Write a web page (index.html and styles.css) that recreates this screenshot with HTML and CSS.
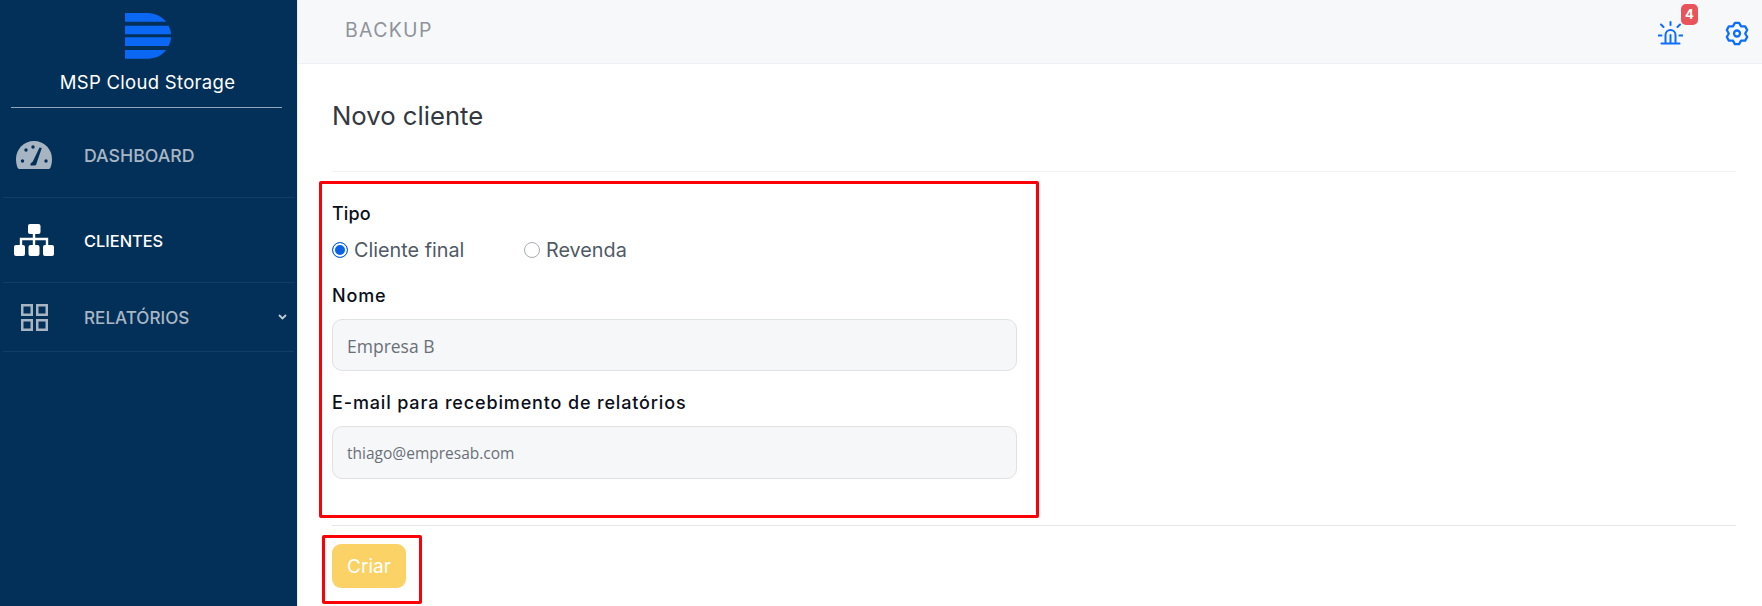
FILE: index.html
```html
<!DOCTYPE html>
<html lang="pt">
<head>
<meta charset="utf-8">
<title>Novo cliente</title>
<link rel="stylesheet" href="styles.css">
</head>
<body>
<div class="app">
  <aside class="sidebar">
    <div class="brand">
      <svg class="logo" width="46" height="46" viewBox="0 0 46 46"><path fill="#0a68f5" d="M0 0H23C30 0 37 3.500 41 8.700H0ZM0 12.700H43.500C45 15.500 46 18.500 46 21.300H0ZM0 24.300H46C46 27.500 45 30.500 43.500 33H0ZM0 37H41C37 42.500 30 45.700 23 45.700H0Z"/></svg>
      <div class="brand-name">MSP Cloud Storage</div>
    </div>
    <nav class="menu">
      <a class="menu-item item-dash">
        <span class="menu-icon">
          <svg width="36" height="28" viewBox="0 0 36 28"><path fill="#a7b4c2" d="M18 0C8 0 0 8 0 18C0 21 .5 24 1.500 26.500C2 27.500 3 28 4 28H32C33 28 34 27.500 34.500 26.500C35.500 24 36 21 36 18C36 8 28 0 18 0Z"/><g fill="#033058"><circle cx="17" cy="6" r="1.700"/><circle cx="10" cy="9" r="1.700"/><circle cx="6.500" cy="20" r="1.700"/><circle cx="30" cy="20" r="1.700"/><path d="M23.500 6.500L25.800 7L20.500 22.500C20.500 24 19.500 24.500 18 24.500H14.500C14 23 15 21.500 16.700 20.700Z"/></g></svg>
        </span>
        <span class="menu-label">DASHBOARD</span>
      </a>
      <a class="menu-item item-clients active">
        <span class="menu-icon">
          <svg width="40" height="32" viewBox="0 0 40 32" fill="#fff"><rect x="14" y="0" width="12.500" height="10" rx="2"/><path d="M18.800 10H21.200V13.800H34.200V21H31.800V16.200H21.200V21H18.800V16.200H8.200V21H5.800V13.800H18.800Z"/><rect x="0" y="21" width="11" height="11" rx="2"/><rect x="14.500" y="21" width="11" height="11" rx="2"/><rect x="29" y="21" width="11" height="11" rx="2"/></svg>
        </span>
        <span class="menu-label">CLIENTES</span>
      </a>
      <a class="menu-item item-reports">
        <span class="menu-icon">
          <svg width="27" height="27" viewBox="0 0 27 27" fill="none" stroke="#a7b4c2" stroke-width="2.500"><rect x="1.250" y="1.250" width="9.500" height="9.500"/><rect x="16.250" y="1.250" width="9.500" height="9.500"/><rect x="1.250" y="16.250" width="9.500" height="9.500"/><rect x="16.250" y="16.250" width="9.500" height="9.500"/></svg>
        </span>
        <span class="menu-label">RELATÓRIOS</span>
        <svg class="chev" width="9" height="6" viewBox="0 0 9 6" fill="none" stroke="#c3ccd6" stroke-width="1.800"><path d="M1 1L4.500 4.500L8 1"/></svg>
      </a>
    </nav>
  </aside>
  <main class="main">
    <header class="topbar">
      <span class="page-kicker">BACKUP</span>
      <div class="top-icons">
        <span class="alarm">
          <svg width="25" height="24" viewBox="0 0 25 24" fill="none" stroke="#0d6efd" stroke-width="2" stroke-linecap="round"><path d="M7.500 21V14A5 5 0 0 1 17.500 14V21M12.500 14V21M3.500 22.500H21.500M12.500 1V4M3 3.500L5.500 6M22 3.500L19.500 6M.5 14.500H3.500M21.500 14.500H24.500"/></svg>
          <span class="badge">4</span>
        </span>
        <svg width="24" height="25" viewBox="0 0 24 25" fill="none" stroke="#0d6efd" stroke-width="2.300" stroke-linejoin="round"><path d="M9.940 1.900H14.060L16.100 5.400H20.150L22.200 9L20.200 12.500L22.200 16L20.150 19.590H16.100L14.060 23.100H9.940L7.900 19.600H3.850L1.800 16L3.800 12.500L1.800 9L3.850 5.410H7.900Z"/><circle cx="12" cy="12.500" r="3"/></svg>
      </div>
    </header>
    <section class="card">
      <h1 class="card-title">Novo cliente</h1>
      <form class="form">
        <div class="field-label label-type">Tipo</div>
        <div class="radios">
          <label class="radio"><span class="dot checked"></span>Cliente final</label>
          <label class="radio"><span class="dot"></span>Revenda</label>
        </div>
        <div class="field-label label-name">Nome</div>
        <div class="input input-name">Empresa B</div>
        <div class="field-label label-mail">E-mail para recebimento de relatórios</div>
        <div class="input input-mail">thiago@empresab.com</div>
      </form>
      <div class="actions"><button type="button" class="btn">Criar</button></div>
    </section>
    <div class="mark mark-form"></div>
    <div class="mark mark-btn"></div>
  </main>
</div>
</body>
</html>
```
FILE: styles.css
```css
* { box-sizing: border-box; }
html, body { margin: 0; height: 606px; overflow: hidden; background: #fff; }
body { font-family: "Inter", "Open Sans", sans-serif; }
.app { display: flex; height: 606px; }
.sidebar { width: 298px; flex: none; background: #033058; border-right: 1px solid #e9edf2; color: #fff; }
.brand { display: flex; flex-direction: column; align-items: center; margin: 0 15px 0 11px; height: 108px; padding: 13px 0 0 2px; border-bottom: 1px solid #8fa6bd; }
.brand-name { font-size: 18.5px; line-height: 24px; margin-top: 11px; letter-spacing: .3px; white-space: nowrap; }
.menu { padding: 0 3px; }
.menu-item { display: flex; align-items: center; border-bottom: 1px solid #0f3d66; color: #a9b6c4; font-weight: 500; }
.item-dash { height: 90px; padding-top: 5px; font-size: 17.7px; }
.item-clients { height: 85px; font-size: 16.4px; }
.item-clients .menu-label { padding-top: 2px; }
.item-reports { height: 69px; font-size: 17.1px; }
.active { color: #fff; }
.menu-icon { width: 81px; flex: none; display: flex; justify-content: center; padding-right: 19px; }
.chev { margin-left: auto; margin-right: 7px; }
.main { flex: 1; position: relative; min-width: 0; }
.topbar { height: 64px; background: #f7f8fa; border-bottom: 1px solid #eef0f3; display: flex; align-items: center; justify-content: space-between; padding: 0 13px 4px 47px; }
.page-kicker { color: #8f949b; font-size: 19.5px; letter-spacing: 1.3px; }
.top-icons { display: flex; align-items: center; gap: 42px; padding-top: 7px; }
.alarm { position: relative; display: block; height: 24px; }
.badge { position: absolute; left: 23px; top: -17px; width: 17px; height: 21px; border-radius: 5px; background: #e9545b; color: #fff; font-size: 13px; font-weight: 700; text-align: center; line-height: 21px; }
.card { margin: 0 26px 0 34px; }
.card-title { margin: 0; height: 108px; padding-top: 37px; font-size: 25.7px; line-height: 30px; font-weight: 400; color: #333840; border-bottom: 1px solid #f0f1f3; }
.form { height: 354px; border-bottom: 1px solid #e3e5e8; padding-top: 30px; }
.field-label { font-size: 18px; line-height: 24px; font-weight: 500; letter-spacing: .85px; color: #0b0f1a; }
.label-type { letter-spacing: .1px; }
.radios { display: flex; margin-top: 12px; color: #4f5966; font-size: 19.8px; line-height: 24px; }
.radio { display: flex; align-items: center; gap: 6px; width: 192px; }
.dot { width: 16px; height: 16px; border-radius: 50%; border: 1px solid #a9acb4; background: #fff; }
.dot.checked { border: 1px solid #0b62e4; background: #0b62e4; box-shadow: inset 0 0 0 2px #fff; }
.label-name { margin-top: 22px; }
.input { width: 685px; height: 52px; margin-top: 11px; border: 1px solid #dfe1e4; border-radius: 10px; background: #f6f7f9; padding: 0 14px; font-family: "Open Sans", sans-serif; line-height: 52px; color: #6a7078; }
.input-name { font-size: 17.5px; }
.label-mail { margin-top: 20px; }
.input-mail { height: 53px; font-size: 15.5px; }
.actions { padding-top: 18px; }
.btn { width: 74px; height: 44px; border: 0; border-radius: 9px; background: #fbd266; color: #fff; font-family: inherit; font-size: 19px; padding: 0; }
.mark { position: absolute; border: 3px solid #fb0007; border-radius: 2px; }
.mark-form { left: 21px; top: 181px; width: 720px; height: 337px; }
.mark-btn { left: 24px; top: 535px; width: 100px; height: 69px; }
```
